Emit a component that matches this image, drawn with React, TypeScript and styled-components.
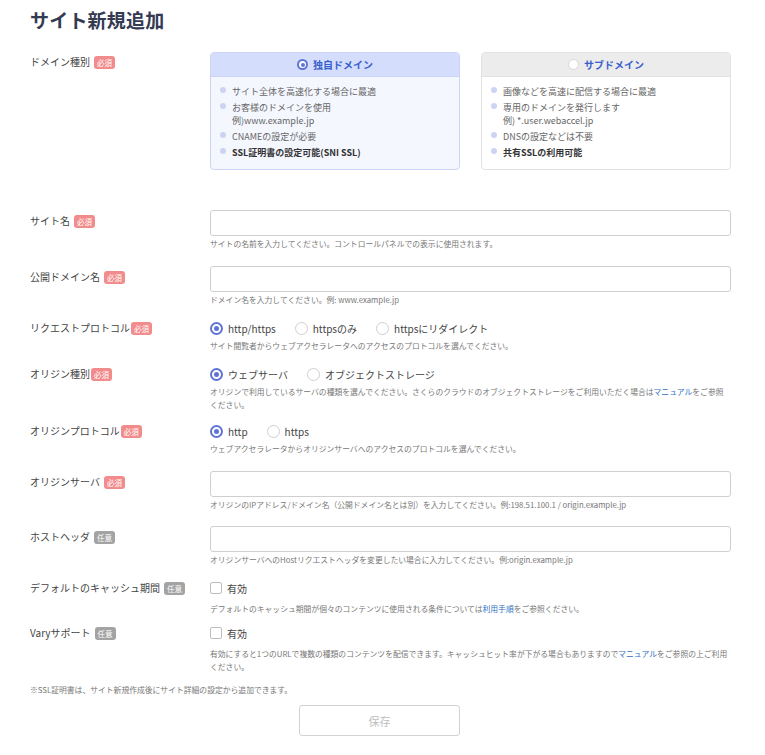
import React from "react";
import styled, { createGlobalStyle } from "styled-components";

const GlobalStyle = createGlobalStyle`
  html, body {
    margin: 0;
    padding: 0;
    background: #ffffff;
  }
  body {
    font-family: "Noto Sans CJK JP", "Noto Sans", "Liberation Sans", sans-serif;
    color: #444;
  }
`;

const Page = styled.main`
  width: 765px;
  box-sizing: border-box;
  padding: 6px 34px 20px 30px;
`;

const Title = styled.h1`
  margin: 0 0 18px;
  font-size: 19px;
  line-height: 28px;
  font-weight: 700;
  color: #343a52;
  letter-spacing: 0.2px;
`;

const Row = styled.section<{ $gap?: number }>`
  display: grid;
  grid-template-columns: 180px 1fr;
  margin-bottom: ${(p) => p.$gap ?? 16}px;
`;

const Label = styled.div<{ $pad?: number }>`
  font-size: 10px;
  line-height: 14px;
  padding-top: ${(p) => p.$pad ?? 4}px;
  color: #444;
  display: flex;
  align-items: flex-start;
`;

const Badge = styled.span<{ $optional?: boolean; $tight?: boolean }>`
  display: inline-block;
  margin-left: ${(p) => (p.$tight ? 1 : 4)}px;
  margin-top: 1px;
  padding: 0 3px;
  height: 13px;
  line-height: 13px;
  font-size: 7.5px;
  color: #fff;
  border-radius: 3px;
  background: ${(p) => (p.$optional ? "#a3a3a3" : "#f28c8c")};
`;

const Field = styled.div`
  display: flex;
  flex-direction: column;
`;

const Input = styled.input`
  box-sizing: border-box;
  width: 100%;
  height: 26px;
  border: 1px solid #cfcfcf;
  border-radius: 3px;
  background: #fff;
  margin: 0;
  outline: none;
`;

const Hint = styled.p<{ $top?: number }>`
  margin: ${(p) => p.$top ?? 1}px 0 0;
  font-size: 7.8px;
  line-height: 13px;
  color: #777;
`;

const Link = styled.a`
  color: #2f6fc6;
  text-decoration: none;
`;

const Options = styled.div`
  display: flex;
  gap: 19px;
  height: 20px;
  align-items: center;
  margin-top: 2px;
`;

const Option = styled.label`
  display: flex;
  align-items: center;
  gap: 5px;
  font-size: 10px;
  color: #444;
`;

const RadioMark = styled.span<{ $on?: boolean }>`
  box-sizing: border-box;
  width: 13px;
  height: 13px;
  border-radius: 50%;
  border: ${(p) => (p.$on ? "2px solid #5f74d4" : "1px solid #cfcfcf")};
  background: #fff;
  display: flex;
  align-items: center;
  justify-content: center;
  &::after {
    content: "";
    width: 5px;
    height: 5px;
    border-radius: 50%;
    background: ${(p) => (p.$on ? "#5f74d4" : "transparent")};
  }
`;

const CheckMark = styled.span`
  box-sizing: border-box;
  width: 12px;
  height: 12px;
  border: 1px solid #bdbdbd;
  border-radius: 2px;
  background: #fff;
`;

const CheckRow = styled.div`
  display: flex;
  height: 24px;
  align-items: center;
`;

const Cards = styled.div`
  display: grid;
  grid-template-columns: 1fr 1fr;
  gap: 21px;
`;

const Card = styled.div<{ $active?: boolean }>`
  border: 1px solid ${(p) => (p.$active ? "#cbd4f7" : "#e2e2e2")};
  border-radius: 4px;
  background: ${(p) => (p.$active ? "#f5f7ff" : "#fff")};
  overflow: hidden;
  height: 118px;
  box-sizing: border-box;
`;

const CardHead = styled.div<{ $active?: boolean }>`
  height: 23px;
  display: flex;
  align-items: center;
  justify-content: center;
  gap: 5px;
  background: ${(p) => (p.$active ? "#d5ddfc" : "#ececec")};
  border-bottom: 1px solid ${(p) => (p.$active ? "#cbd4f7" : "#e2e2e2")};
  font-size: 10px;
  font-weight: 700;
  color: #3860cc;
`;

const HeadRadio = styled.span<{ $on?: boolean }>`
  box-sizing: border-box;
  width: 11px;
  height: 11px;
  border-radius: 50%;
  border: ${(p) => (p.$on ? "2px solid #5f74d4" : "1px solid #d6d6d6")};
  background: #fff;
  display: flex;
  align-items: center;
  justify-content: center;
  &::after {
    content: "";
    width: 4px;
    height: 4px;
    border-radius: 50%;
    background: ${(p) => (p.$on ? "#5f74d4" : "transparent")};
  }
`;

const List = styled.ul`
  list-style: none;
  margin: 0;
  padding: 8px 10px 0 9px;
`;

const Item = styled.li<{ $strong?: boolean }>`
  position: relative;
  padding-left: 12px;
  font-size: 9px;
  line-height: 13px;
  margin-bottom: 3px;
  color: ${(p) => (p.$strong ? "#333" : "#666")};
  font-weight: ${(p) => (p.$strong ? 700 : 400)};
  &::before {
    content: "";
    position: absolute;
    left: 0;
    top: 2px;
    width: 6px;
    height: 6px;
    border-radius: 50%;
    background: #cdd4f3;
  }
`;

const Note = styled.p`
  margin: 0 0 9px;
  font-size: 7.8px;
  line-height: 13px;
  color: #777;
`;

const Actions = styled.div`
  display: flex;
  justify-content: center;
`;

const SaveButton = styled.button`
  width: 161px;
  height: 31px;
  border: 1px solid #d2d2d2;
  border-radius: 3px;
  background: #fff;
  color: #bdbdbd;
  font-family: inherit;
  font-size: 11px;
  margin-right: 2px;
`;

type Opt = { label: string; on?: boolean };

const Radios = ({ items }: { items: Opt[] }) => (
  <Options>
    {items.map((o) => (
      <Option key={o.label}>
        <RadioMark $on={o.on} />
        {o.label}
      </Option>
    ))}
  </Options>
);

const Checkbox = ({ label }: { label: string }) => (
  <CheckRow>
    <Option>
      <CheckMark />
      {label}
    </Option>
  </CheckRow>
);

const Required = ({ tight }: { tight?: boolean }) => <Badge $tight={tight}>必須</Badge>;
const Optional = () => <Badge $optional>任意</Badge>;

export default function App() {
  return (
    <>
      <GlobalStyle />
      <Page>
        <Title>サイト新規追加</Title>

        <Row $gap={40}>
          <Label $pad={3}>
            ドメイン種別
            <Required />
          </Label>
          <Cards>
            <Card $active>
              <CardHead $active>
                <HeadRadio $on />
                独自ドメイン
              </CardHead>
              <List>
                <Item>サイト全体を高速化する場合に最適</Item>
                <Item>
                  お客様のドメインを使用
                  <br />
                  例)www.example.jp
                </Item>
                <Item>CNAMEの設定が必要</Item>
                <Item $strong>SSL証明書の設定可能(SNI SSL)</Item>
              </List>
            </Card>
            <Card>
              <CardHead>
                <HeadRadio />
                サブドメイン
              </CardHead>
              <List>
                <Item>画像などを高速に配信する場合に最適</Item>
                <Item>
                  専用のドメインを発行します
                  <br />
                  例) *.user.webaccel.jp
                </Item>
                <Item>DNSの設定などは不要</Item>
                <Item $strong>共有SSLの利用可能</Item>
              </List>
            </Card>
          </Cards>
        </Row>

        <Row $gap={16}>
          <Label>
            サイト名
            <Required />
          </Label>
          <Field>
            <Input />
            <Hint>サイトの名前を入力してください。コントロールパネルでの表示に使用されます。</Hint>
          </Field>
        </Row>

        <Row $gap={10}>
          <Label>
            公開ドメイン名
            <Required />
          </Label>
          <Field>
            <Input />
            <Hint>ドメイン名を入力してください。例: www.example.jp</Hint>
          </Field>
        </Row>

        <Row $gap={10}>
          <Label $pad={5}>
            リクエストプロトコル
            <Required tight />
          </Label>
          <Field>
            <Radios items={[{ label: "http/https", on: true }, { label: "httpsのみ" }, { label: "httpsにリダイレクト" }]} />
            <Hint>サイト閲覧者からウェブアクセラレータへのアクセスのプロトコルを選んでください。</Hint>
          </Field>
        </Row>

        <Row $gap={8}>
          <Label $pad={5}>
            オリジン種別
            <Required tight />
          </Label>
          <Field>
            <Radios items={[{ label: "ウェブサーバ", on: true }, { label: "オブジェクトストレージ" }]} />
            <Hint>
              オリジンで利用しているサーバの種類を選んでください。さくらのクラウドのオブジェクトストレージをご利用いただく場合は
              <Link>マニュアル</Link>をご参照ください。
            </Hint>
          </Field>
        </Row>

        <Row $gap={16}>
          <Label $pad={5}>
            オリジンプロトコル
            <Required tight />
          </Label>
          <Field>
            <Radios items={[{ label: "http", on: true }, { label: "https" }]} />
            <Hint>ウェブアクセラレータからオリジンサーバへのアクセスのプロトコルを選んでください。</Hint>
          </Field>
        </Row>

        <Row $gap={15}>
          <Label>
            オリジンサーバ
            <Required />
          </Label>
          <Field>
            <Input />
            <Hint>オリジンのIPアドレス/ドメイン名（公開ドメイン名とは別）を入力してください。例:198.51.100.1 / origin.example.jp</Hint>
          </Field>
        </Row>

        <Row $gap={10}>
          <Label>
            ホストヘッダ
            <Optional />
          </Label>
          <Field>
            <Input />
            <Hint>オリジンサーバへのHostリクエストヘッダを変更したい場合に入力してください。例:origin.example.jp</Hint>
          </Field>
        </Row>

        <Row $gap={6}>
          <Label $pad={5}>
            デフォルトのキャッシュ期間
            <Optional />
          </Label>
          <Field>
            <Checkbox label="有効" />
            <Hint $top={2}>
              デフォルトのキャッシュ期間が個々のコンテンツに使用される条件については<Link>利用手順</Link>をご参照ください。
            </Hint>
          </Field>
        </Row>

        <Row $gap={10}>
          <Label $pad={5}>
            Varyサポート
            <Optional />
          </Label>
          <Field>
            <Checkbox label="有効" />
            <Hint $top={2}>
              有効にすると1つのURLで複数の種類のコンテンツを配信できます。キャッシュヒット率が下がる場合もありますので
              <Link>マニュアル</Link>をご参照の上ご利用ください。
            </Hint>
          </Field>
        </Row>

        <Note>※SSL証明書は、サイト新規作成後にサイト詳細の設定から追加できます。</Note>

        <Actions>
          <SaveButton type="button">保存</SaveButton>
        </Actions>
      </Page>
    </>
  );
}
